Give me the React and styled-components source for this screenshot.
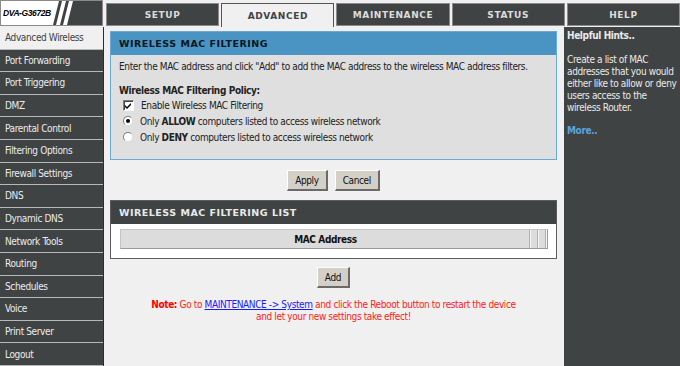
import React from 'react';
import styled, { createGlobalStyle } from 'styled-components';

const GlobalStyle = createGlobalStyle`
  html, body {
    margin: 0;
    padding: 0;
    background: #f0f0f0;
  }
  body {
    font-family: "DejaVu Sans Condensed", "Liberation Sans", Arial, sans-serif;
    font-size: 10px;
    letter-spacing: -0.38px;
  }
`;

const Page = styled.div`
  width: 680px;
  height: 366px;
  overflow: hidden;
  display: flex;
  flex-direction: column;
  background: #f0f0f0;
`;

const TopBar = styled.div`
  height: 27px;
  display: flex;
  flex-shrink: 0;
`;

const Logo = styled.div`
  width: 103px;
  height: 26px;
  position: relative;
  background: #404344;
  box-sizing: border-box;
  border: 1px solid #8a8a8a;
  overflow: hidden;
`;

const LogoText = styled.div`
  position: relative;
  z-index: 1;
  color: #000;
  font-family: "Liberation Sans", Arial, sans-serif;
  font-weight: bold;
  font-style: italic;
  font-size: 8.5px;
  letter-spacing: -0.4px;
  padding: 0 2px;
  line-height: 24px;
`;

const LogoArt = styled.svg`
  position: absolute;
  left: 0;
  top: 0;
`;

const Tabs = styled.div`
  flex: 1;
  display: flex;
  gap: 2px;
  padding: 3px 0 0 3px;
`;

const Tab = styled.div`
  flex: 1;
  box-sizing: border-box;
  display: flex;
  align-items: center;
  justify-content: center;
  font-family: "DejaVu Sans", "Liberation Sans", sans-serif;
  font-size: 9px;
  font-weight: bold;
  letter-spacing: 0.6px;
  border: 1px solid ${p => (p.$active ? '#555' : '#8a8a8a')};
  border-bottom: ${p => (p.$active ? 'none' : '1px solid #8a8a8a')};
  background: ${p => (p.$active ? '#f0f0f0' : '#404344')};
  color: ${p => (p.$active ? '#404344' : '#dcdcdc')};
  height: ${p => (p.$active ? '24px' : '23px')};
`;

const Body = styled.div`
  flex: 1;
  display: flex;
`;

const Sidebar = styled.div`
  width: 103px;
  background: #404344;
  display: flex;
  flex-direction: column;
  border-right: 1px solid #2a2c2d;
`;

const NavItem = styled.div`
  height: 21.6px;
  box-sizing: content-box;
  border-bottom: 1px solid #b8b8b8;
  padding-left: 5px;
  display: flex;
  align-items: center;
  color: ${p => (p.$active ? '#404344' : '#ececec')};
  background: ${p => (p.$active ? '#f0f0f0' : 'transparent')};
`;

const Content = styled.div`
  flex: 1;
  padding: 4px 7px 0 6px;
  display: flex;
  flex-direction: column;
  align-items: stretch;
`;

const Box = styled.div`
  border: 1px solid ${p => (p.$dark ? '#5a5c5d' : '#6aa9d6')};
  background: ${p => (p.$dark ? '#fff' : '#dfdfdf')};
`;

const BoxHeader = styled.div`
  height: 23px;
  display: flex;
  align-items: center;
  padding-left: 8px;
  font-family: "DejaVu Sans", "Liberation Sans", sans-serif;
  font-size: 9.5px;
  font-weight: bold;
  letter-spacing: 0.5px;
  background: ${p => (p.$dark ? '#404344' : '#4a94c3')};
  color: ${p => (p.$dark ? '#eaeaea' : '#0b1620')};
`;

const BoxBody = styled.div`
  padding: 5px 8px 14px 8px;
  color: #222;
`;

const Intro = styled.div`
  line-height: 13px;
  margin-bottom: 11px;
`;

const PolicyTitle = styled.div`
  font-weight: bold;
  line-height: 13px;
`;

const OptionRow = styled.div`
  display: flex;
  align-items: center;
  height: 16px;
  gap: 7px;
  padding-left: 4px;
`;

const Check = styled.span`
  width: 9px;
  height: 9px;
  background: #fff;
  border-top: 1px solid #808080;
  border-left: 1px solid #808080;
  border-bottom: 1px solid #fff;
  border-right: 1px solid #fff;
  box-shadow: inset 1px 1px 0 #404040;
  display: inline-flex;
  align-items: center;
  justify-content: center;
`;

const Radio = styled.span`
  width: 10px;
  height: 10px;
  border-radius: 50%;
  background: #fff;
  box-sizing: border-box;
  border: 1px solid #808080;
  border-right-color: #e0e0e0;
  border-bottom-color: #e0e0e0;
  display: inline-flex;
  align-items: center;
  justify-content: center;
  &::after {
    content: '';
    width: 4px;
    height: 4px;
    border-radius: 50%;
    background: ${p => (p.$on ? '#000' : 'transparent')};
  }
`;

const ButtonRow = styled.div`
  display: flex;
  justify-content: center;
  gap: 7px;
  margin: ${p => p.$top}px 0 ${p => p.$bottom}px;
`;

const Button = styled.div`
  height: 21px;
  box-sizing: border-box;
  padding: 0 7px;
  display: flex;
  align-items: center;
  background: #d4d0c8;
  color: #111;
  border-top: 1px solid #fff;
  border-left: 1px solid #fff;
  border-right: 2px solid #6a6a6a;
  border-bottom: 2px solid #6a6a6a;
`;

const ListBody = styled.div`
  padding: 5px 8px 9px 9px;
`;

const ListTable = styled.div`
  display: flex;
  height: 18px;
  border: 1px solid #c4c4c4;
  border-right-color: #9a9a9a;
  border-bottom-color: #9a9a9a;
`;

const HeadCell = styled.div`
  flex: ${p => (p.$narrow ? '0 0 7px' : '1')};
  background: #dcdcdc;
  border-right: 1px solid #f6f6f6;
  box-shadow: inset -1px 0 0 #b0b0b0;
  display: flex;
  align-items: center;
  justify-content: center;
  font-weight: bold;
  color: #111;
`;

const Note = styled.div`
  text-align: center;
  color: #ff2020;
  line-height: 12px;
  margin-top: 2px;
  b {
    color: #ff0000;
  }
  a {
    color: #1a1aff;
    text-decoration: underline;
  }
`;

const Hints = styled.div`
  width: 116px;
  background: #404344;
  color: #eaeaea;
  padding: 3px 2px 0 3px;
  box-sizing: border-box;
  line-height: 12px;
`;

const HintTitle = styled.div`
  font-weight: bold;
  margin-bottom: 12px;
`;

const More = styled.div`
  color: #5aa4dc;
  font-weight: bold;
  margin-top: 11px;
`;

const navItems = [
  'Advanced Wireless', 'Port Forwarding', 'Port Triggering', 'DMZ', 'Parental Control',
  'Filtering Options', 'Firewall Settings', 'DNS', 'Dynamic DNS', 'Network Tools',
  'Routing', 'Schedules', 'Voice', 'Print Server', 'Logout',
];

const tabs = ['SETUP', 'ADVANCED', 'MAINTENANCE', 'STATUS', 'HELP'];

function LogoMark() {
  return (
    <LogoArt width="103" height="24" viewBox="0 0 103 24">
      <path d="M0 0 L58 0 L52 24 L0 24 Z" fill="#fff" />
      <path d="M61 0 L65 0 L59 24 L55 24 Z" fill="#fff" />
      <path d="M68 0 L72 0 L66 24 L62 24 Z" fill="#fff" />
    </LogoArt>
  );
}

export default function App() {
  return (
    <Page>
      <GlobalStyle />
      <TopBar>
        <Logo>
          <LogoMark />
          <LogoText>DVA-G3672B</LogoText>
        </Logo>
        <Tabs>
          {tabs.map(t => (
            <Tab key={t} $active={t === 'ADVANCED'}>{t}</Tab>
          ))}
        </Tabs>
      </TopBar>
      <Body>
        <Sidebar>
          {navItems.map((n, i) => (
            <NavItem key={n} $active={i === 0}>{n}</NavItem>
          ))}
        </Sidebar>
        <Content>
          <Box>
            <BoxHeader>WIRELESS MAC FILTERING</BoxHeader>
            <BoxBody>
              <Intro>Enter the MAC address and click "Add" to add the MAC address to the wireless MAC address filters.</Intro>
              <PolicyTitle>Wireless MAC Filtering Policy:</PolicyTitle>
              <OptionRow>
                <Check>
                  <svg width="7" height="7" viewBox="0 0 7 7">
                    <path d="M0 3 L2 5 L6 1 L6 3 L2 7 L0 5 Z" fill="#000" />
                  </svg>
                </Check>
                Enable Wireless MAC Filtering
              </OptionRow>
              <OptionRow>
                <Radio $on />
                <span>Only <b>ALLOW</b> computers listed to access wireless network</span>
              </OptionRow>
              <OptionRow>
                <Radio />
                <span>Only <b>DENY</b> computers listed to access wireless network</span>
              </OptionRow>
            </BoxBody>
          </Box>
          <ButtonRow $top={10} $bottom={9}>
            <Button>Apply</Button>
            <Button>Cancel</Button>
          </ButtonRow>
          <Box $dark>
            <BoxHeader $dark>WIRELESS MAC FILTERING LIST</BoxHeader>
            <ListBody>
              <ListTable>
                <HeadCell>MAC Address</HeadCell>
                <HeadCell $narrow />
                <HeadCell $narrow />
              </ListTable>
            </ListBody>
          </Box>
          <ButtonRow $top={8} $bottom={9}>
            <Button>Add</Button>
          </ButtonRow>
          <Note>
            <b>Note:</b> Go to <a>MAINTENANCE -&gt; System</a> and click the Reboot button to restart the device<br />
            and let your new settings take effect!
          </Note>
        </Content>
        <Hints>
          <HintTitle>Helpful Hints..</HintTitle>
          Create a list of MAC addresses that you would either like to allow or deny users access to the wireless Router.
          <More>More..</More>
        </Hints>
      </Body>
    </Page>
  );
}
